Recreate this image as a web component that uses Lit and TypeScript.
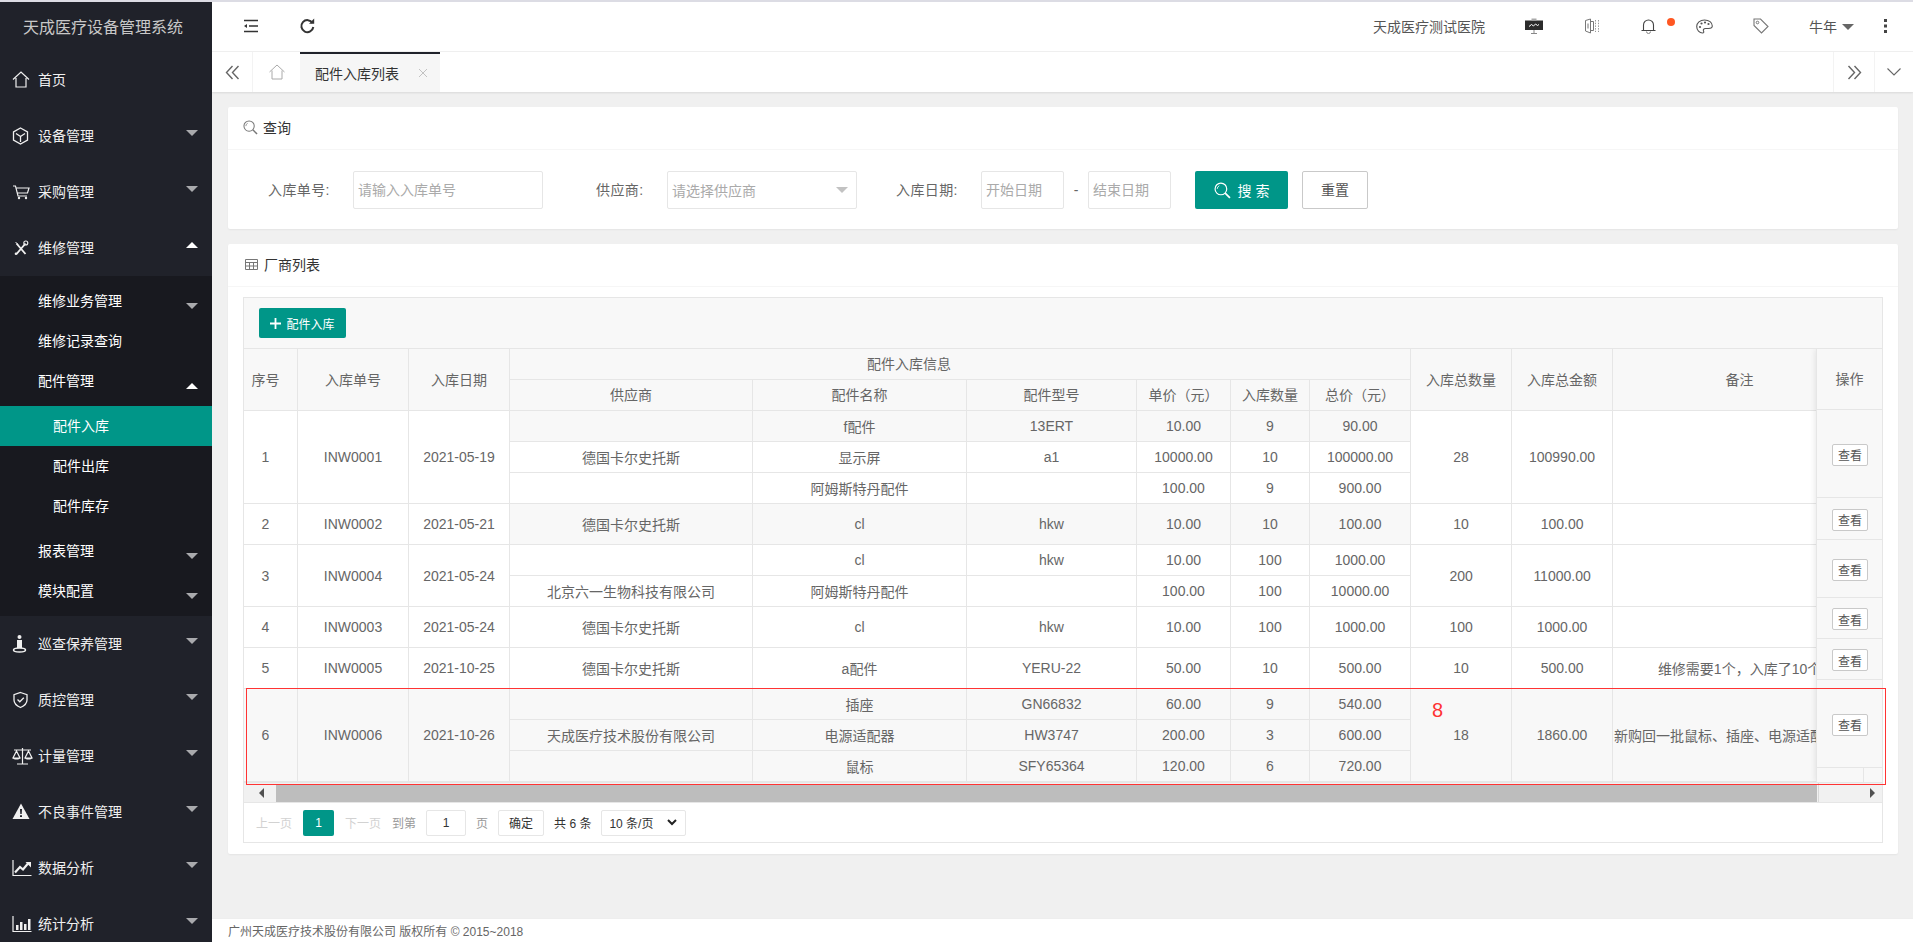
import { LitElement, html, css, svg } from "lit";
import { customElement } from "lit/decorators.js";

type Sub = [string, string, string, string, string, string];
interface Row { no: string; code: string; date: string; qty: string; amt: string; remark: string; tall: boolean; hover?: boolean; clip?: boolean; shaded: number[]; subs: Sub[]; }

const ROWS: Row[] = [
  { no: "1", code: "INW0001", date: "2021-05-19", qty: "28", amt: "100990.00", remark: "", tall: false, shaded: [0], subs: [
    ["", "f配件", "13ERT", "10.00", "9", "90.00"],
    ["德国卡尔史托斯", "显示屏", "a1", "10000.00", "10", "100000.00"],
    ["", "阿姆斯特丹配件", "", "100.00", "9", "900.00"] ] },
  { no: "2", code: "INW0002", date: "2021-05-21", qty: "10", amt: "100.00", remark: "", tall: true, shaded: [0], subs: [
    ["德国卡尔史托斯", "cl", "hkw", "10.00", "10", "100.00"] ] },
  { no: "3", code: "INW0004", date: "2021-05-24", qty: "200", amt: "11000.00", remark: "", tall: false, shaded: [], subs: [
    ["", "cl", "hkw", "10.00", "100", "1000.00"],
    ["北京六一生物科技有限公司", "阿姆斯特丹配件", "", "100.00", "100", "10000.00"] ] },
  { no: "4", code: "INW0003", date: "2021-05-24", qty: "100", amt: "1000.00", remark: "", tall: true, shaded: [], subs: [
    ["德国卡尔史托斯", "cl", "hkw", "10.00", "100", "1000.00"] ] },
  { no: "5", code: "INW0005", date: "2021-10-25", qty: "10", amt: "500.00", remark: "维修需要1个，入库了10个", tall: true, shaded: [], subs: [
    ["德国卡尔史托斯", "a配件", "YERU-22", "50.00", "10", "500.00"] ] },
  { no: "6", code: "INW0006", date: "2021-10-26", qty: "18", amt: "1860.00", remark: "新购回一批鼠标、插座、电源适配器", tall: false, hover: true, clip: true, shaded: [0, 1, 2], subs: [
    ["", "插座", "GN66832", "60.00", "9", "540.00"],
    ["天成医疗技术股份有限公司", "电源适配器", "HW3747", "200.00", "3", "600.00"],
    ["", "鼠标", "SFY65364", "120.00", "6", "720.00"] ] },
];
const COLS = [54, 111, 101, 243, 214, 170, 94, 79, 101, 101, 101, 254];
const FIXED_H = [88, 42, 58, 41, 41, 88];

const I = {
  home: svg`<path d="M1 10.500 9 3l8 7.500M4 9v9h10V9" fill="none" stroke="currentColor" stroke-width="1.200"/>`,
  cube: svg`<path d="M8.500 3l7 4v8l-7 4-7-4V7zM4 8.500l4.500 3 4.500-3M8.500 11.500V17" fill="none" stroke="currentColor" stroke-width="1.300"/>`,
  cart: svg`<path d="M1 5h2.500L6 15h9M4.300 7H17l-1.500 5H5.500" fill="none" stroke="currentColor" stroke-width="1.200"/><circle cx="7" cy="17" r="1.200" fill="currentColor"/><circle cx="14" cy="17" r="1.200" fill="currentColor"/>`,
  tools: svg`<path d="M4.500 6.500l9 10.500M13.500 6.500l-9 10.500" fill="none" stroke="currentColor" stroke-width="1.900"/><circle cx="13.800" cy="6" r="2" fill="none" stroke="currentColor" stroke-width="1.100"/><path d="M3.500 5l2.500 2.500" stroke="currentColor" stroke-width="1"/><circle cx="4" cy="16.800" r="1.300" fill="currentColor"/>`,
  person: svg`<circle cx="7.500" cy="4" r="2" fill="currentColor"/><path d="M5 7h5v8H5z" fill="currentColor"/><ellipse cx="7.500" cy="17" rx="6" ry="2" fill="none" stroke="currentColor" stroke-width="1.500"/>`,
  shield: svg`<path d="M8.500 3.500l6.500 2.200V11c0 3.600-3 6-6.500 7.500C5 17 2 14.600 2 11V5.700zM5.500 10.500l2.300 2.300 4-4" fill="none" stroke="currentColor" stroke-width="1.300"/>`,
  scale: svg`<path d="M10.500 3v16M5 19h11M2 5h17M4.500 6 1 13h7zM16.500 6 13 13h7z" fill="none" stroke="currentColor" stroke-width="1.200"/><path d="M1 13h7c0 2-7 2-7 0zM13 13h7c0 2-7 2-7 0z" fill="currentColor"/>`,
  warn: svg`<path d="M9 2.500 17.500 18H.5z" fill="currentColor"/><path d="M8 8h2l-.3 5H8.300zM8 14.200h2V16H8z" fill="#20222a"/>`,
  line: svg`<path d="M1 3v15.500h18.500" fill="none" stroke="currentColor" stroke-width="1.200"/><path d="M3 15.500 8 10l3 2.500 5-6" fill="none" stroke="currentColor" stroke-width="2.200"/><path d="M13.500 5H19v5.500z" fill="currentColor"/>`,
  bars: svg`<path d="M1 3v15.500h18.500" fill="none" stroke="currentColor" stroke-width="1.200"/><path d="M4 12h2.500v5H4zM8 9h2.500v8H8zM12 11h2.500v6H12zM16 6h2.500v11H16z" fill="currentColor"/>`,
};

const MENU: [string, keyof typeof I][] = [
  ["巡查保养管理", "person"], ["质控管理", "shield"], ["计量管理", "scale"],
  ["不良事件管理", "warn"], ["数据分析", "line"], ["统计分析", "bars"],
];

@customElement("app-root")
export class AppRoot extends LitElement {
  static styles = css`
    :host { display: block; height: 100vh; overflow: hidden; font-family: "Liberation Sans", "Noto Sans CJK SC", sans-serif; font-size: 14px; color: #666; background: #f0f0f0; }
    * { box-sizing: border-box; }
    svg { display: block; flex: none; }
    .strip { height: 2px; background: #dcdce4; }
    .shell { display: flex; height: calc(100vh - 2px); }
    .side { width: 212px; flex: none; background: #20222a; color: #f0f0f0; overflow: hidden; }
    .logo { height: 50px; display: flex; align-items: center; padding: 0 0 2px 23px; font-size: 16px; color: #c8c8c8; }
    .item { height: 56px; display: flex; align-items: center; padding-left: 12px; }
    .item span, .sub span, .leaf span { margin-top: -2px; }
    .ico { width: 22px; height: 22px; margin-right: 4px; overflow: visible; }
    .arrow { margin-left: auto; margin-right: 14px; width: 0; height: 0; border: 6px solid transparent; border-bottom-width: 0; border-top-color: #a9aaad; margin-top: -6px; }
    .arrow.up { border-top-width: 0; border-bottom-width: 6px; border-bottom-color: #fff; }
    .subnav { background: #18191f; padding: 5px 0; color: #fff; }
    .sub { height: 40px; display: flex; align-items: center; padding-left: 38px; }
    .sub .arrow { margin-top: 10px; }
    .subgroup { padding: 5px 0; }
    .leaf { height: 40px; display: flex; align-items: center; padding-left: 53px; }
    .leaf.on { background: #009688; }

    .right { flex: 1; min-width: 0; display: flex; flex-direction: column; }
    .top { height: 50px; flex: none; background: #fff; border-bottom: 1px solid #f0f0f0; display: flex; align-items: center; color: #444; padding-bottom: 1px; }
    .top .tl { display: flex; align-items: center; margin-left: 31px; }
    .tr { margin-left: auto; display: flex; align-items: center; }
    .hosp { font-size: 14px; color: #555; margin-right: 40px; }
    .hi1 { margin-right: 42px; } .hi2 { margin-right: 41px; } .hi4 { margin-right: 40px; } .hi5 { margin-right: 40px; }
    .dot { width: 8px; height: 8px; border-radius: 50%; background: #ff5722; margin: -8px 21px 0 11px; flex: none; }
    .user { color: #555; }
    .caret { width: 0; height: 0; border: 6px solid transparent; border-bottom-width: 0; border-top-color: #666; margin: 2px 30px 0 5px; }
    .more { margin-right: 26px; }

    .tabs { height: 40px; flex: none; background: #fff; display: flex; box-shadow: 0 1px 2px rgba(0,0,0,.1); position: relative; color: #666; }
    .tb { width: 41px; display: flex; align-items: center; justify-content: center; border-right: 1px solid #f3f3f3; }
    .tb.h { width: 47px; border-right: 0; color: #aaa; }
    .tab { width: 140px; background: #f6f6f6; border-top: 2px solid #20222a; display: flex; align-items: center; padding-left: 15px; font-size: 14px; color: #333; }
    .tab .x { margin-left: auto; margin-right: 13px; color: #c2c2c2; }
    .tb.r { margin-left: auto; border-right: 0; border-left: 1px solid #f3f3f3; }
    .tb.r2 { margin-left: 0; width: 39px; border-right: 0; border-left: 1px solid #f3f3f3; }

    .main { flex: 1; min-height: 0; padding: 15px 15px 0 16px; display: flex; flex-direction: column; gap: 15px; }
    .card { background: #fff; border-radius: 2px; box-shadow: 0 1px 2px rgba(0,0,0,.05); }
    .ch { height: 43px; padding: 0 0 2px 15px; display: flex; align-items: center; gap: 5px; color: #333; border-bottom: 1px solid #f6f6f6; }
    .form { display: flex; align-items: center; padding: 21px 0 20px 40px; }
    .lb { color: #666; white-space: nowrap; letter-spacing: .4px; margin-top: -2px; }
    .f { height: 38px; border: 1px solid #e6e6e6; border-radius: 2px; padding: 0 4px; font: inherit; color: #666; background: #fff; outline: none; }
    .f::placeholder { color: #aaa; opacity: 1; }
    .selectbox { display: flex; align-items: center; color: #aaa; padding-right: 8px; }
    .selectbox i { margin-left: auto; width: 0; height: 0; border: 6px solid transparent; border-bottom-width: 0; border-top-color: #c2c2c2; }
    .btn1 { height: 38px; width: 93px; background: #009688; color: #fff; border: 0; border-radius: 2px; display: flex; align-items: center; justify-content: center; gap: 7px; font: inherit; }
    .btn1 span { letter-spacing: 4px; margin-right: -4px; }
    .btn2 { height: 38px; width: 66px; background: #fff; color: #555; border: 1px solid #c9c9c9; border-radius: 2px; font: inherit; margin-left: 14px; padding: 0 0 2px; }

    .cb { padding: 10px 15px 11px; }
    .box { border: 1px solid #e6e6e6; }
    .tool { height: 51px; background: #f8f8f8; border-bottom: 1px solid #e6e6e6; padding: 10px 0 0 15px; }
    .add { height: 30px; width: 87px; background: #009688; color: #fff; border: 0; border-radius: 2px; font: inherit; font-size: 12px; display: flex; align-items: center; justify-content: center; gap: 5px; padding: 0; }
    .wrap { position: relative; height: 433px; overflow: hidden; }
    table { border-collapse: collapse; table-layout: fixed; width: 1623px; margin: -1px 0 0 -1px; }
    th, td { border: 1px solid #e6e6e6; height: 31px; padding: 0; font-weight: 400; text-align: center; color: #666; white-space: nowrap; overflow: hidden; background: #fff; }
    th { background: #f8f8f8; padding-bottom: 2px; }
    th.group { padding-right: 102px; }
    td.gray { background: #f8f8f8; }
    .tall td { height: 41px; }
    .first { padding-right: 10px; }
    td.clip { text-align: left; padding-left: 1px; }
    .fixed { position: absolute; top: 0; right: 0; width: 66px; height: 433px; background: #f8f8f8; box-shadow: -1px 0 6px rgba(0,0,0,.09); border-left: 1px solid #e6e6e6; display: flex; flex-direction: column; }
    .fh { height: 61px; flex: none; display: flex; align-items: center; justify-content: center; border-bottom: 1px solid #e6e6e6; padding-bottom: 2px; }
    .fr { display: flex; align-items: center; justify-content: flex-end; padding: 2px 14px 0 0; border-bottom: 1px solid #e6e6e6; flex: none; }
    .view { height: 22px; width: 36px; background: #fff; border: 1px solid #c9c9c9; border-radius: 2px; font: inherit; font-size: 12px; color: #555; padding: 0; }
    .fe { flex: 1; display: flex; justify-content: flex-end; }
    .fe div { width: 19px; border-left: 1px solid #e6e6e6; }
    .bar { height: 21px; background: #f1f1f1; border-top: 1px solid #e6e6e6; border-bottom: 1px solid #e6e6e6; display: flex; align-items: center; }
    .bar .l { width: 32px; display: flex; justify-content: center; padding-left: 3px; }
    .bar .thumb { width: 1541px; height: 18px; background: #bdbdbd; margin-top: 1px; }
    .bar .r { flex: 1; display: flex; justify-content: flex-end; padding-right: 7px; border-left: 1px solid #d8d8d8; margin-left: 1px; height: 100%; align-items: center; }
    .tl-a { width: 0; height: 0; border: 5px solid transparent; border-left-width: 0; border-right-color: #505050; }
    .tr-a { width: 0; height: 0; border: 5px solid transparent; border-right-width: 0; border-left-color: #505050; }
    .pager { height: 39px; display: flex; align-items: center; gap: 10px; padding-left: 12px; font-size: 12px; color: #999; white-space: nowrap; }
    .off { color: #d2d2d2; }
    .cur { width: 31px; height: 26px; margin: 0 1px; background: #009688; color: #fff; border-radius: 2px; display: flex; align-items: center; justify-content: center; }
    .pin { width: 40px; height: 26px; border: 1px solid #e6e6e6; border-radius: 2px; text-align: center; font: inherit; color: #333; padding: 0; outline: none; }
    .ok { width: 46px; height: 26px; border: 1px solid #e6e6e6; border-radius: 2px; background: #fff; font: inherit; color: #333; padding: 0; }
    .total { color: #333; }
    .psel { width: 85px; height: 26px; border: 1px solid #e6e6e6; border-radius: 2px; background: #fff; color: #333; padding: 0 8px 0 7px; display: flex; align-items: center; justify-content: space-between; }
    .foot { height: 24px; flex: none; background: #fff; border-top: 1px solid #eee; display: flex; align-items: center; padding-left: 16px; font-size: 12px; color: #666; margin-top: auto; }
    .mark { position: absolute; left: 246px; top: 688px; width: 1640px; height: 97px; border: 1.5px solid #f33; pointer-events: none; }
    .eight { position: absolute; left: 1432px; top: 698px; font-size: 20px; line-height: 24px; color: #f33; }
  `;

  private icon(k: keyof typeof I) {
    return svg`<svg class="ico" viewBox="0 0 22 22">${I[k]}</svg>`;
  }

  private item(t: string, k: keyof typeof I, arrow = true, up = false) {
    return html`<div class="item">${this.icon(k)}<span>${t}</span>${arrow ? html`<i class="arrow ${up ? "up" : ""}"></i>` : ""}</div>`;
  }

  private sub(t: string, arrow = true, up = false) {
    return html`<div class="sub"><span>${t}</span>${arrow ? html`<i class="arrow ${up ? "up" : ""}"></i>` : ""}</div>`;
  }

  private renderRow(r: Row) {
    return r.subs.map((s, i) => {
      const n = r.subs.length;
      const sh = r.shaded.includes(i) ? "gray" : "";
      const hv = r.hover ? "gray" : "";
      return html`<tr class="${r.tall ? "tall" : ""}">
        ${i === 0 ? html`
          <td class="first ${hv}" rowspan=${n}>${r.no}</td>
          <td class="${hv}" rowspan=${n}>${r.code}</td>
          <td class="${hv}" rowspan=${n}>${r.date}</td>` : ""}
        ${s.map((c) => html`<td class="${sh}">${c}</td>`)}
        ${i === 0 ? html`
          <td class="${hv}" rowspan=${n}>${r.qty}</td>
          <td class="${hv}" rowspan=${n}>${r.amt}</td>
          <td class="${hv} ${r.clip ? "clip" : ""}" rowspan=${n}>${r.remark}</td>` : ""}
      </tr>`;
    });
  }

  render() {
    const glass = (c: string, s: number) => html`<svg width=${s} height=${s} viewBox="0 0 16 16"><circle cx="6.500" cy="6.500" r="5.500" fill="none" stroke=${c} stroke-width="1.100"/><path d="M10.500 10.500 15 15" stroke=${c} stroke-width="1.600"/><path d="M3 6.500a3.500 3.500 0 0 1 2-3" fill="none" stroke=${c} stroke-width=".8"/></svg>`;
    return html`
      <div class="strip"></div>
      <div class="shell">
        <aside class="side">
          <div class="logo">天成医疗设备管理系统</div>
          ${this.item("首页", "home", false)}
          ${this.item("设备管理", "cube")}
          ${this.item("采购管理", "cart")}
          ${this.item("维修管理", "tools", true, true)}
          <div class="subnav">
            ${this.sub("维修业务管理")}
            ${this.sub("维修记录查询", false)}
            ${this.sub("配件管理", true, true)}
            <div class="subgroup">
              <div class="leaf on"><span>配件入库</span></div>
              <div class="leaf"><span>配件出库</span></div>
              <div class="leaf"><span>配件库存</span></div>
            </div>
            ${this.sub("报表管理")}
            ${this.sub("模块配置")}
          </div>
          ${MENU.map(([t, k]) => this.item(t, k))}
        </aside>
        <div class="right">
          <header class="top">
            <div class="tl">
              <svg width="16" height="14" viewBox="0 0 16 14" style="margin-right:40px"><path d="M1 1.500h14M6 7h9M1 12.500h14" stroke="#333" stroke-width="1.600" fill="none"/><path d="M1 7l3-2v4z" fill="#333"/></svg>
              <svg width="16" height="16" viewBox="0 0 16 16"><path d="M13.500 5A6 6 0 1 0 14.300 9" fill="none" stroke="#333" stroke-width="2"/><path d="M10 5.800h5.200V.6z" fill="#333"/></svg>
            </div>
            <div class="tr">
              <span class="hosp">天成医疗测试医院</span>
              <svg class="hi1" width="18" height="16" viewBox="0 0 18 16"><rect x="0" y="2.500" width="18" height="9.500" fill="#2b2b2b"/><rect x="6.500" y=".5" width="5" height="2" fill="#aaa"/><path d="M9 12v3M6 15.500h6" stroke="#888"/><path d="M4 8.500l2.500-2 2 1.500 2-2 2 1.500 1.500-1" fill="none" stroke="#fff"/></svg>
              <svg class="hi2" width="15" height="16" viewBox="0 0 15 16"><path d="M.5 2.500 5.500 1v14L.5 13zM5.500 3.500h3v9h-3M3 5.500v5" fill="none" stroke="#777"/><path d="M10.500 2v12M13.500 2v12" stroke="#999" stroke-dasharray="1.500 1.200"/></svg>
              <svg width="15" height="16" viewBox="0 0 15 16"><path d="M2.500 12.500V7a5 5 0 0 1 10 0v5.500M.5 12.500h14" fill="none" stroke="#444" stroke-width="1.100"/><path d="M5.500 13.500a2 2 0 0 0 4 0" fill="none" stroke="#888"/></svg>
              <i class="dot"></i>
              <svg class="hi4" width="17" height="15" viewBox="0 0 17 15"><path d="M8.500 1C4 1 .7 4 .7 7.500S3.500 14 6.500 14c1.500 0 1.500-1 1-2s0-2.500 2-2.500h3c2 0 3.800-.8 3.800-2.500C16.300 3.500 13 1 8.500 1z" fill="none" stroke="#555" stroke-width="1.100"/><circle cx="4" cy="8" r="1.100" fill="#555"/><circle cx="5.500" cy="4.500" r="1.100" fill="#555"/><circle cx="9" cy="3.500" r="1.100" fill="#555"/><circle cx="12.500" cy="5" r="1.100" fill="#555"/></svg>
              <svg class="hi5" width="16" height="16" viewBox="0 0 16 16"><path d="M1 1h6.500l7.500 7.500L8.500 15 1 7.500z" fill="none" stroke="#777" stroke-width="1.100"/><circle cx="4.500" cy="4.500" r="1.300" fill="none" stroke="#777"/></svg>
              <span class="user">牛年</span>
              <i class="caret"></i>
              <svg class="more" width="3" height="14" viewBox="0 0 3 14"><path d="M0 0h3v3H0zM0 5.500h3v3H0zM0 11h3v3H0z" fill="#444"/></svg>
            </div>
          </header>
          <nav class="tabs">
            <div class="tb"><svg width="15" height="15" viewBox="0 0 15 15"><path d="M7.500 1 1.500 7.500l6 6.500M13.500 1l-6 6.500 6 6.500" fill="none" stroke="currentColor" stroke-width="1.400"/></svg></div>
            <div class="tb h"><svg width="16" height="16" viewBox="0 0 16 16"><path d="M.5 8 8 1l7.500 7M3 6.500V15h10V6.500" fill="none" stroke="currentColor" stroke-width="1"/></svg></div>
            <div class="tab">配件入库列表<svg class="x" width="8" height="8" viewBox="0 0 8 8"><path d="M0 0l8 8M8 0 0 8" stroke="currentColor"/></svg></div>
            <div class="tb r"><svg width="15" height="15" viewBox="0 0 15 15"><path d="M1.500 1l6 6.500-6 6.500M7.500 1l6 6.500-6 6.500" fill="none" stroke="currentColor" stroke-width="1.400"/></svg></div>
            <div class="tb r2"><svg width="14" height="8" viewBox="0 0 14 8"><path d="M.5.5 7 7 13.500.5" fill="none" stroke="currentColor" stroke-width="1.100"/></svg></div>
          </nav>
          <main class="main">
            <section class="card">
              <div class="ch">${glass("#777", 15)}<span>查询</span></div>
              <div class="form">
                <span class="lb" style="width:61px">入库单号:</span>
                <input class="f" style="width:190px;margin-left:24px" placeholder="请输入入库单号" />
                <span class="lb" style="margin-left:53px;width:46px">供应商:</span>
                <div class="f selectbox" style="width:190px;margin-left:25px">请选择供应商<i></i></div>
                <span class="lb" style="margin-left:39px;width:60px">入库日期:</span>
                <input class="f" style="width:83px;margin-left:25px" placeholder="开始日期" />
                <span style="width:24px;text-align:center">-</span>
                <input class="f" style="width:83px" placeholder="结束日期" />
                <button class="btn1" style="margin-left:24px">${glass("#fff", 17)}<span>搜索</span></button>
                <button class="btn2">重置</button>
              </div>
            </section>
            <section class="card">
              <div class="ch"><svg width="13" height="11" viewBox="0 0 13 11" style="margin:0 1px 0 2px"><path d="M.5.5h12v10H.5zM.5 3.500h12M.5 7h12M4.500 3.500v7M8.500 3.500v7" fill="none" stroke="#777"/></svg><span>厂商列表</span></div>
              <div class="cb">
                <div class="box">
                  <div class="tool"><button class="add"><svg width="11" height="11" viewBox="0 0 11 11"><path d="M5.500 0v11M0 5.500h11" stroke="#fff" stroke-width="1.800"/></svg>配件入库</button></div>
                  <div class="wrap">
                    <table>
                      <colgroup>${COLS.map((w) => html`<col style="width:${w}px" />`)}</colgroup>
                      <thead>
                        <tr><th class="first" rowspan="2">序号</th><th rowspan="2">入库单号</th><th rowspan="2">入库日期</th><th class="group" colspan="6">配件入库信息</th><th rowspan="2">入库总数量</th><th rowspan="2">入库总金额</th><th rowspan="2">备注</th></tr>
                        <tr><th>供应商</th><th>配件名称</th><th>配件型号</th><th>单价（元）</th><th>入库数量</th><th>总价（元）</th></tr>
                      </thead>
                      <tbody>${ROWS.map((r) => this.renderRow(r))}</tbody>
                    </table>
                    <div class="fixed">
                      <div class="fh">操作</div>
                      ${FIXED_H.map((h) => html`<div class="fr" style="height:${h}px"><button class="view">查看</button></div>`)}
                      <div class="fe"><div></div></div>
                    </div>
                  </div>
                  <div class="bar"><div class="l"><i class="tl-a"></i></div><div class="thumb"></div><div class="r"><i class="tr-a"></i></div></div>
                  <div class="pager">
                    <span class="off">上一页</span>
                    <span class="cur">1</span>
                    <span class="off">下一页</span>
                    <span style="margin-left:1px">到第</span>
                    <input class="pin" value="1" />
                    <span>页</span>
                    <button class="ok">确定</button>
                    <span class="total">共 6 条</span>
                    <div class="psel"><span>10 条/页</span><svg width="10" height="7" viewBox="0 0 10 7"><path d="M1 1l4 4 4-4" fill="none" stroke="#222" stroke-width="2"/></svg></div>
                  </div>
                </div>
              </div>
            </section>
          </main>
          <footer class="foot">广州天成医疗技术股份有限公司 版权所有 © 2015~2018</footer>
        </div>
      </div>
      <div class="mark"></div>
      <div class="eight">8</div>
    `;
  }
}
